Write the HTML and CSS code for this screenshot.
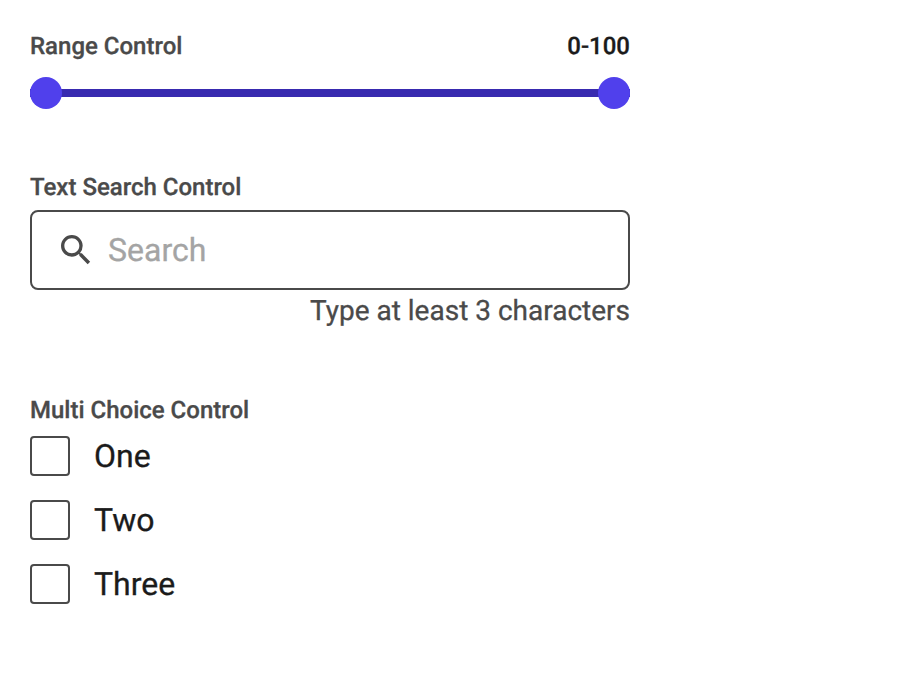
FILE: index.html
```html
<!DOCTYPE html>
<html lang="en">
<head>
<meta charset="utf-8">
<title>Controls</title>
<link rel="stylesheet" href="styles.css">
</head>
<body>
<main class="controls">
  <section class="range">
    <div class="range-head"><span class="label">Range Control</span><span class="value">0-100</span></div>
    <div class="slider"><span class="thumb"></span><span class="thumb"></span></div>
  </section>
  <section class="text-search">
    <label class="label" for="q">Text Search Control</label>
    <div class="search-box">
      <svg class="search-icon" viewBox="0 0 24 24"><path d="M15.5 14h-.79l-.28-.27A6.471 6.471 0 0 0 16 9.5 6.5 6.5 0 1 0 9.5 16c1.61 0 3.09-.59 4.23-1.57l.27.28v.79l5 4.99L20.49 19l-4.99-5zm-6 0C7.01 14 5 11.99 5 9.5S7.01 5 9.5 5 14 7.01 14 9.5 11.99 14 9.5 14z"/></svg>
      <input id="q" class="search-input" type="text" placeholder="Search">
    </div>
    <p class="hint">Type at least 3 characters</p>
  </section>
  <section class="choices">
    <span class="label">Multi Choice Control</span>
    <label class="choice"><input type="checkbox" class="box"><span>One</span></label>
    <label class="choice"><input type="checkbox" class="box"><span>Two</span></label>
    <label class="choice"><input type="checkbox" class="box"><span>Three</span></label>
  </section>
</main>
</body>
</html>
```
FILE: styles.css
```css
* { box-sizing: border-box; }
body { margin: 0; background: #fff; font-family: Roboto, sans-serif; color: #1b1b1b; text-rendering: geometricPrecision; -webkit-text-stroke: 0.3px; }
.controls { width: 600px; margin-left: 30px; padding-top: 30px; }
.label, .value { display: block; font-size: 24px; line-height: 32px; font-weight: 500; }
.label { color: #4a4a4a; }
.range-head { display: flex; justify-content: space-between; }
.slider { display: flex; align-items: center; justify-content: space-between; height: 32px; margin-top: 15px; background: linear-gradient(#382ab0, #382ab0) center / 100% 8px no-repeat; }
.thumb { width: 32px; height: 32px; border-radius: 50%; background: #5040ec; }
.text-search { margin-top: 62px; }
.search-box { display: flex; align-items: center; height: 80px; margin-top: 7px; padding-left: 24px; border: 2px solid #4a4a4a; border-radius: 8px; }
.search-icon { width: 40px; height: 40px; fill: #4a4a4a; }
.search-input { flex: 1; min-width: 0; margin: 0 0 0 12px; padding: 0; border: 0; outline: 0; background: none; font: 400 32px/40px Roboto, sans-serif; text-rendering: inherit; }
.search-input::placeholder { color: #a4a4a4; opacity: 1; }
.hint { margin: 1px 0 0; font-size: 28px; line-height: 40px; text-align: right; color: #4a4a4a; }
.choices { margin-top: 63px; }
.choice { display: flex; align-items: center; height: 40px; margin-bottom: 24px; font-size: 32px; line-height: 40px; }
.choices .label { margin-bottom: 10px; }
.box { appearance: none; width: 40px; height: 40px; margin: 0 24px 0 0; border: 2px solid #4a4a4a; border-radius: 4px; background: #fff; }
```
